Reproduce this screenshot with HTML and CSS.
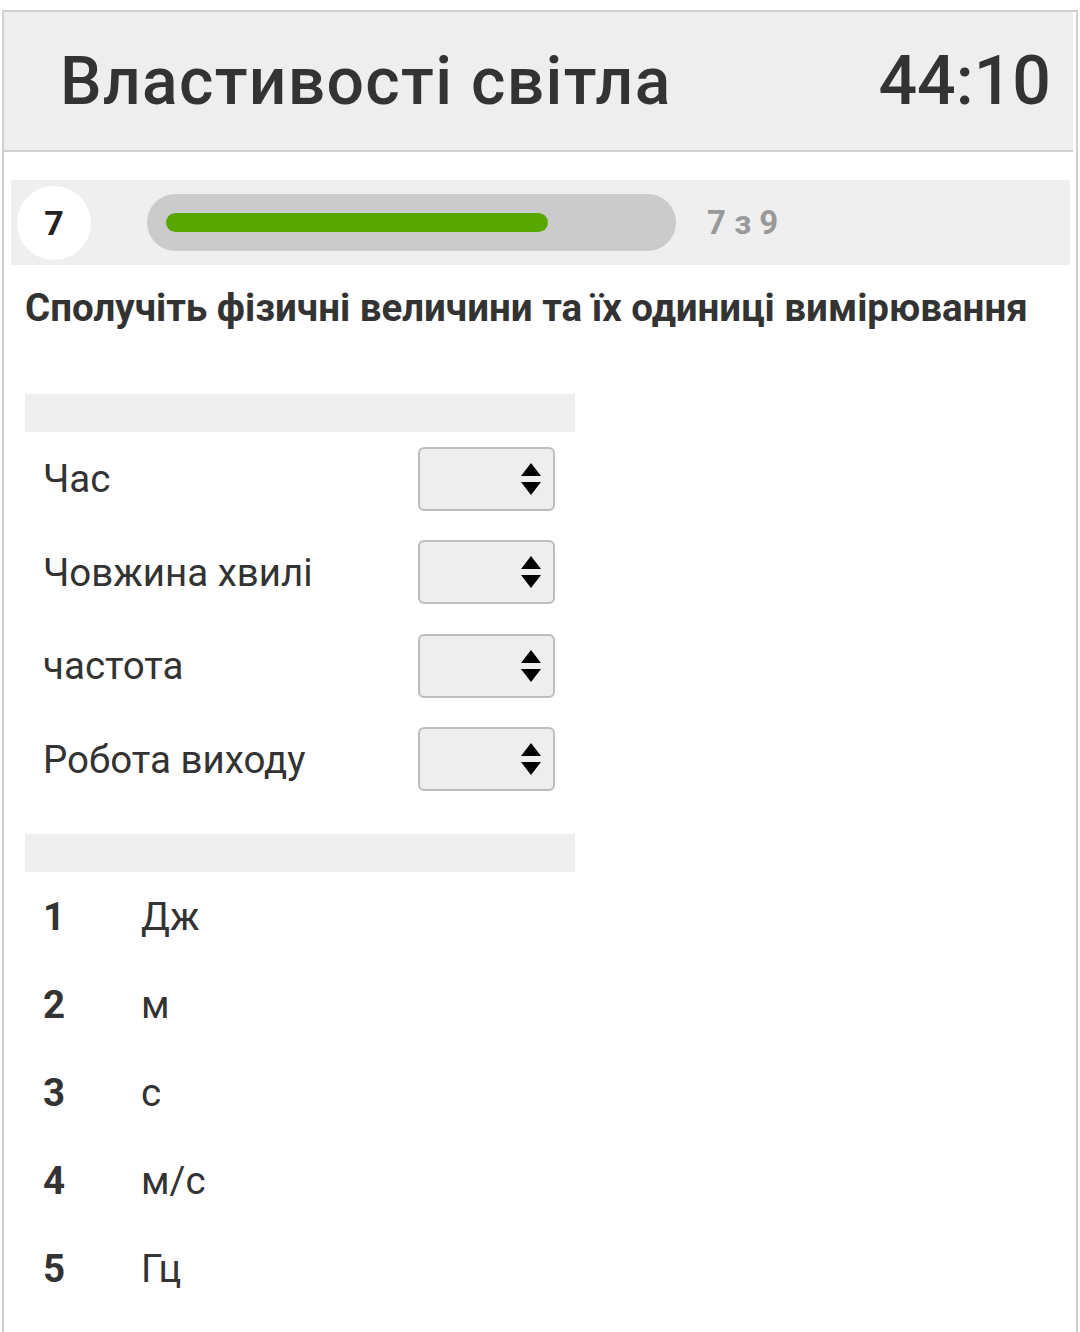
FILE: index.html
```html
<!DOCTYPE html>
<html lang="uk">
<head>
<meta charset="utf-8">
<title>Властивості світла</title>
<link rel="stylesheet" href="styles.css">
</head>
<body>
<div class="frame">
  <header class="header">
    <h1 class="title">Властивості світла</h1>
    <div class="timer">44:10</div>
  </header>

  <div class="progress">
    <div class="qnum">7</div>
    <div class="track"><div class="fill" style="width: 77.78%"></div></div>
    <div class="count">7 з 9</div>
  </div>

  <h2 class="question">Сполучіть фізичні величини та їх одиниці вимірювання</h2>

  <div class="table">
    <div class="thead"></div>
    <div class="mrow"><span class="label">Час</span><div class="select"><svg class="arrows" width="20" height="32" viewBox="0 0 20 32"><path d="M10 0 L20 13 L0 13 Z M0 19 L20 19 L10 32 Z" fill="#000"/></svg></div></div>
    <div class="mrow"><span class="label">Човжина хвилі</span><div class="select"><svg class="arrows" width="20" height="32" viewBox="0 0 20 32"><path d="M10 0 L20 13 L0 13 Z M0 19 L20 19 L10 32 Z" fill="#000"/></svg></div></div>
    <div class="mrow"><span class="label">частота</span><div class="select"><svg class="arrows" width="20" height="32" viewBox="0 0 20 32"><path d="M10 0 L20 13 L0 13 Z M0 19 L20 19 L10 32 Z" fill="#000"/></svg></div></div>
    <div class="mrow"><span class="label">Робота виходу</span><div class="select"><svg class="arrows" width="20" height="32" viewBox="0 0 20 32"><path d="M10 0 L20 13 L0 13 Z M0 19 L20 19 L10 32 Z" fill="#000"/></svg></div></div>
  </div>

  <div class="table answers">
    <div class="thead"></div>
    <div class="arow"><span class="num">1</span><span class="unit">Дж</span></div>
    <div class="arow"><span class="num">2</span><span class="unit">м</span></div>
    <div class="arow"><span class="num">3</span><span class="unit">с</span></div>
    <div class="arow"><span class="num">4</span><span class="unit">м/с</span></div>
    <div class="arow"><span class="num">5</span><span class="unit">Гц</span></div>
  </div>
</div>
</body>
</html>
```

FILE: styles.css
```css
* { box-sizing: border-box; }

html, body {
  margin: 0;
  padding: 0;
  background: #fff;
}

body {
  font-family: Roboto, "Noto Sans", "Liberation Sans", sans-serif;
  color: #333;
  overflow: hidden;
}

.frame {
  margin: 10px 2px 0 2px;
  border: 2px solid #d0d0d0;
  border-bottom: none;
  min-height: 1322px;
}

.header {
  height: 140px;
  background: #eeeeee;
  border-bottom: 2px solid #cfcfcf;
  display: flex;
  align-items: center;
  justify-content: space-between;
  padding: 0 22px 0 56px;
  margin-right: 3px;
}

.title {
  margin: 0;
  font-size: 66px;
  font-weight: 500;
  color: #333;
  letter-spacing: 1.3px;
}

.timer {
  font-size: 68px;
  font-weight: 500;
  color: #333;
}

.progress {
  margin: 28px 6px 0 7px;
  height: 85px;
  background: #efefef;
  display: flex;
  align-items: center;
  padding-left: 6px;
}

.qnum {
  width: 74px;
  height: 74px;
  border-radius: 50%;
  background: #fff;
  display: flex;
  align-items: center;
  justify-content: center;
  font-size: 34px;
  font-weight: 700;
  color: #222;
}

.track {
  margin-left: 56px;
  width: 529px;
  height: 57px;
  border-radius: 29px;
  background: #cbcbcb;
  padding: 0 19px;
  display: flex;
  align-items: center;
}

.fill {
  height: 19px;
  border-radius: 10px;
  background: #58a700;
}

.count {
  margin-left: 31px;
  font-size: 33px;
  font-weight: 700;
  color: #999;
}

.question {
  margin: 20px 0 0 21px;
  font-size: 38.5px;
  font-weight: 700;
  color: #333;
  line-height: 46px;
}

.table {
  margin: 63px 0 0 21px;
  width: 550px;
}

.answers {
  margin-top: 28px;
}

.thead {
  height: 38px;
  background: #eeeeee;
}

.mrow {
  height: 93.5px;
  display: flex;
  align-items: center;
  justify-content: space-between;
  padding: 0 20px 0 18px;
}

.label {
  font-size: 38.5px;
  color: #333;
}

.select {
  width: 137px;
  height: 64px;
  background: #eeeeee;
  border: 2px solid #bdbdbd;
  border-radius: 6px;
  display: flex;
  align-items: center;
  justify-content: flex-end;
  padding-right: 12px;
}

.arrows {
  display: block;
}

.arow {
  height: 88px;
  display: flex;
  align-items: center;
  padding-left: 18px;
}

.num {
  width: 98px;
  font-size: 38.5px;
  font-weight: 700;
  color: #333;
}

.unit {
  font-size: 38.5px;
  color: #333;
}
```
